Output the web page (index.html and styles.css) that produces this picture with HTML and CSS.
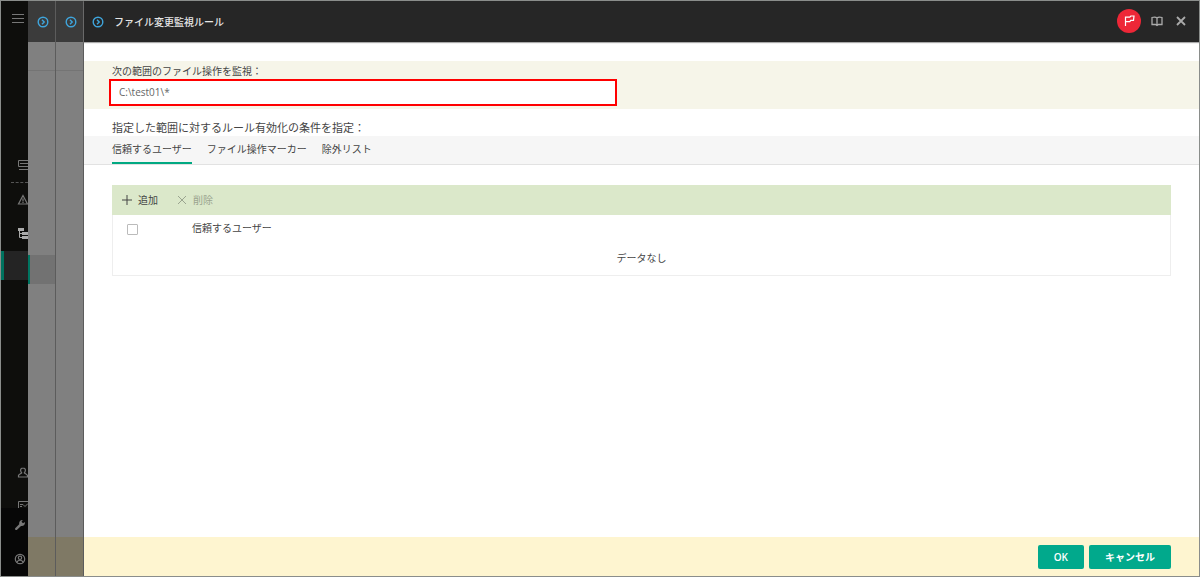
FILE: index.html
```html
<!DOCTYPE html>
<html lang="ja">
<head>
    <meta charset="utf-8">
    <title>ファイル変更監視ルール</title>
    <meta name="viewport" content="width=device-width, initial-scale=1.0">
    <link rel="stylesheet" href="styles.css">
</head>
<body>

    <nav class="sidebar">
        <button class="navItem menu" aria-label="menu">
            <svg width="12" height="11" viewBox="0 0 12 11"><path d="M0 1.500h12M0 5.500h12M0 9.500h12"/></svg>
        </button>
        <div class="navGroup main">
            <a class="navItem" href="#" aria-label="dashboard">
                <svg width="12" height="12" viewBox="0 0 12 12"><path d="M1.500 1.500h10v6h-10zM3 4.500h8M2 10.500h9.500"/></svg>
            </a>
            <hr>
            <a class="navItem" href="#" aria-label="alerts">
                <svg width="12" height="12" viewBox="0 0 12 12"><path d="M6 1.500l4.500 8.500H1.500zM6 4.500v3M6 8v1"  stroke-width="1.200"/></svg>
            </a>
            <a class="navItem bright" href="#" aria-label="tree">
                <svg width="12" height="12" viewBox="0 0 12 12"><path class="solid" d="M1 0h6v3H1zM5 4h7v3H5zM5 8h7v3H5z"/><path d="M2.500 3v6.500H5M2.500 5.500H5"/></svg>
            </a>
            <a class="navItem active" href="#" aria-label="selected"></a>
        </div>
        <div class="navGroup users">
            <a class="navItem" href="#" aria-label="users">
                <svg width="12" height="12" viewBox="0 0 12 12"><path d="M6 1c-1.900 0-2.600 1.300-2.300 2.900.1.900.6 1.500 1 2C4 6.800 2 7 1.500 8.500v1.500h9V8.500C10 7 8 6.800 7.300 5.900c.4-.5.9-1.100 1-2C8.600 2.300 7.900 1 6 1z" stroke-width="1.200"/></svg>
            </a>
            <a class="navItem cut" href="#" aria-label="reports">
                <svg width="12" height="12" viewBox="0 0 12 12"><path d="M1.500 1.500h10v9h-10zM3 4.500h3l2 2 3-3M3 6.500h2"/></svg>
            </a>
        </div>
        <div class="navGroup bottom">
            <a class="navItem" href="#" aria-label="settings">
                <svg width="12" height="12" viewBox="0 0 12 12"><path class="solid" d="M1.200 9.300l4-4C4.700 3 6.300.8 8.800 1L7.500 2.800l1.500 1.400 1.900-1.200c.4 2.700-1.600 4.500-3.900 4L2.800 11C1.700 11.500.6 10.300 1.200 9.300z"/></svg>
            </a>
            <a class="navItem" href="#" aria-label="account">
                <svg width="12" height="12" viewBox="0 0 12 12" stroke-width="1.200"><circle cx="6" cy="6" r="4.700"/><circle cx="6" cy="4.800" r="1.700"/><path d="M3 9.500c.5-3 5.500-3 6 0"/></svg>
            </a>
        </div>
    </nav>

    <!-- panels that lie behind the open one -->
    <div class="layer">
        <div class="layerHead">
            <svg class="arrow" width="12" height="12" viewBox="0 0 12 12"><circle cx="6" cy="6" r="4.800"/><path d="M5 3.800L7.200 6 5 8.200"/></svg>
        </div>
        <div class="layerTop"></div>
        <div class="layerBody"><div class="layerRow"></div></div>
        <div class="layerFoot"></div>
    </div>
    <div class="layer">
        <div class="layerHead">
            <svg class="arrow" width="12" height="12" viewBox="0 0 12 12"><circle cx="6" cy="6" r="4.800"/><path d="M5 3.800L7.200 6 5 8.200"/></svg>
        </div>
        <div class="layerTop"></div>
        <div class="layerBody"></div>
        <div class="layerFoot"></div>
    </div>

    <main class="panel">
        <header class="panelHead">
            <svg class="arrow" width="12" height="12" viewBox="0 0 12 12"><circle cx="6" cy="6" r="4.800"/><path d="M5 3.800L7.200 6 5 8.200"/></svg>
            <h1>ファイル変更監視ルール</h1>
            <div class="headBtns">
                <button class="iconBtn flag" aria-label="flag">
                    <svg width="13" height="13" viewBox="0 0 13 13"><path d="M2.500 12V2.500M2.500 3.200h4.300l1-1.200H11l-.5 4.300H7.800l-1 1.400H2.500" stroke-width="1.200"/></svg>
                </button>
                <button class="iconBtn" aria-label="help">
                    <svg width="12" height="12" viewBox="0 0 12 12"><path d="M6 3C5 2 2.500 2 1 2.500v7h3.500L6 10.500l1.500-1H11v-7C9.500 2 7 2 6 3zv7" stroke-width="1.300"/></svg>
                </button>
                <button class="iconBtn" aria-label="close">
                    <svg width="12" height="12" viewBox="0 0 12 12"><path d="M2 2l8 8M10 2l-8 8" stroke-width="1.800"/></svg>
                </button>
            </div>
        </header>

        <div class="scope">
            <label for="path">次の範囲のファイル操作を監視：</label>
            <input id="path" type="text" value="C:\test01\*">
        </div>

        <h2>指定した範囲に対するルール有効化の条件を指定：</h2>
        <div class="tabs" role="tablist">
            <button class="tab selected" role="tab" aria-selected="true">信頼するユーザー</button>
            <button class="tab" role="tab">ファイル操作マーカー</button>
            <button class="tab" role="tab">除外リスト</button>
        </div>

        <div class="list">
            <div class="toolbar">
                <button class="tool">
                    <svg width="12" height="12" viewBox="0 0 12 12"><path d="M6 1v10M1 6h10"/></svg>
                    追加
                </button>
                <button class="tool" disabled>
                    <svg width="12" height="12" viewBox="0 0 12 12"><path d="M2 2l8 8M10 2l-8 8"/></svg>
                    削除
                </button>
            </div>
            <table>
                <thead>
                    <tr>
                        <th class="check"><input type="checkbox" aria-label="すべて選択"></th>
                        <th>信頼するユーザー</th>
                    </tr>
                </thead>
                <tbody>
                    <tr><td colspan="2">データなし</td></tr>
                </tbody>
            </table>
        </div>

        <footer class="panelFoot">
            <button class="btn">OK</button>
            <button class="btn">キャンセル</button>
        </footer>
    </main>

</body>
</html>
```
FILE: styles.css
```css
*{
    margin:0;
    padding:0;
    box-sizing:border-box;
}

body{
    display:flex;
    height:100vh;
    overflow:hidden;
    border:1px solid #8a8d8b;
    background-color:white;
    color:#444;
    font-family:"Open Sans", "Noto Sans CJK JP", sans-serif;
    font-size:10px;
    line-height:16px;
}

button, input{
    font:inherit;
    color:inherit;
}

button{
    border:none;
    background:none;
}

svg{
    flex:none;
    fill:none;
    stroke:currentColor;
}

.solid{
    fill:currentColor;
    stroke:none;
}

/* sidebar */

.sidebar{
    display:flex;
    flex-direction:column;
    flex:none;
    width:27px;
    overflow:hidden;
    background-color:#0e0e0c;
    color:#777;
}

.navItem{
    display:flex;
    align-items:center;
    flex:none;
    height:34px;
    padding-left:16px;
    color:inherit;
}

.navItem.menu{
    padding-left:11px;
}

.navGroup.main{
    margin-top:113px;
}

.sidebar hr{
    margin-left:10px;
    border:none;
    border-top:1px dashed #555;
}

.navItem.bright{
    color:#aaa;
}

.navItem.active{
    height:29px;
    border-left:3px solid #00735f;
    background-color:#242424;
}

.navGroup.users{
    margin-top:auto;
}

.navItem.cut{
    height:18px;
    align-items:flex-start;
    padding-top:10px;
    overflow:hidden;
}

.navGroup.bottom{
    background-color:#070707;
}

.navGroup.bottom .navItem{
    padding-left:13px;
}

/* layers behind */

.layer{
    display:flex;
    flex-direction:column;
    flex:none;
    width:28px;
    background-color:#808080;
    border-right:1px solid #5c5c5c;
}

.layerHead{
    display:flex;
    align-items:center;
    justify-content:flex-end;
    flex:none;
    height:41px;
    padding-right:6px;
    background-color:#3b3b3b;
}

.arrow{
    color:#3fa5dc;
    stroke-width:1.4;
}

.layerTop{
    height:29px;
    border-bottom:1px solid #747474;
}

.layerBody{
    flex:1;
    padding-top:184px;
}

.layerRow{
    height:29px;
    border-left:2px solid #007561;
    background-color:#727272;
}

.layerFoot{
    height:39px;
    background-color:#7f7965;
}

/* open panel */

.panel{
    display:flex;
    flex-direction:column;
    flex:1;
    min-width:0;
}

.panelHead{
    display:flex;
    align-items:center;
    flex:none;
    height:41px;
    padding:0 6px 0 8px;
    background-color:#262626;
    box-shadow:0 1px 1px #aaa;
    color:#aaa;
}

h1{
    flex:1;
    margin-left:10px;
    color:#e6e6e6;
    font-size:10px;
    font-weight:500;
}

.headBtns{
    display:flex;
    align-items:center;
    padding-bottom:2px;
}

.iconBtn{
    display:flex;
    align-items:center;
    justify-content:center;
    width:24px;
    height:24px;
}

.iconBtn.flag{
    border-radius:50%;
    background-color:#ee2737;
    color:white;
    margin-right:4px;
}

.scope{
    display:flex;
    flex-direction:column;
    margin-top:19px;
    padding:3px 28px 3px 25px;
    background-color:#f6f5e9;
}

.scope label{
    padding-left:3px;
    line-height:15px;
}

.scope input{
    width:508px;
    max-width:100%;
    height:27px;
    padding:0 8px 2px;
    border:2px solid #f00;
    background-color:white;
    color:#666;
    outline:none;
}

h2{
    margin-top:11px;
    padding-left:28px;
    font-size:11px;
    font-weight:400;
}

.tabs{
    display:flex;
    gap:15px;
    padding:0 28px;
    background-color:#f6f6f6;
    border-bottom:1px solid #e2e2e2;
}

.tab{
    height:28px;
    border-bottom:2px solid transparent;
}

.tab.selected{
    border-color:#01a982;
}

.list{
    margin:20px 28px 0;
}

.toolbar{
    display:flex;
    gap:18px;
    height:30px;
    padding:0 9px;
    background-color:#dbe8ca;
}

.tool{
    display:flex;
    align-items:center;
    gap:5px;
}

.tool:disabled{
    color:#9aa48f;
}

table{
    width:100%;
    border:1px solid #eee;
    border-top:none;
    border-spacing:0;
}

th, td{
    height:30px;
    padding-bottom:4px;
    font-weight:400;
    text-align:left;
    vertical-align:middle;
}

th.check{
    width:79px;
    padding:0 0 2px 14px;
}

td{
    text-align:center;
}

input[type=checkbox]{
    display:block;
    appearance:none;
    width:11px;
    height:11px;
    border:1px solid #bbb;
    border-radius:1px;
    background-color:white;
}

.panelFoot{
    display:flex;
    align-items:center;
    justify-content:flex-end;
    gap:5px;
    height:39px;
    margin-top:auto;
    padding:0 28px;
    background-color:#fef5d0;
}

.btn{
    height:24px;
    padding:0 16px;
    border-radius:2px;
    background-color:#01a98c;
    color:white;
    font-weight:600;
}
```
